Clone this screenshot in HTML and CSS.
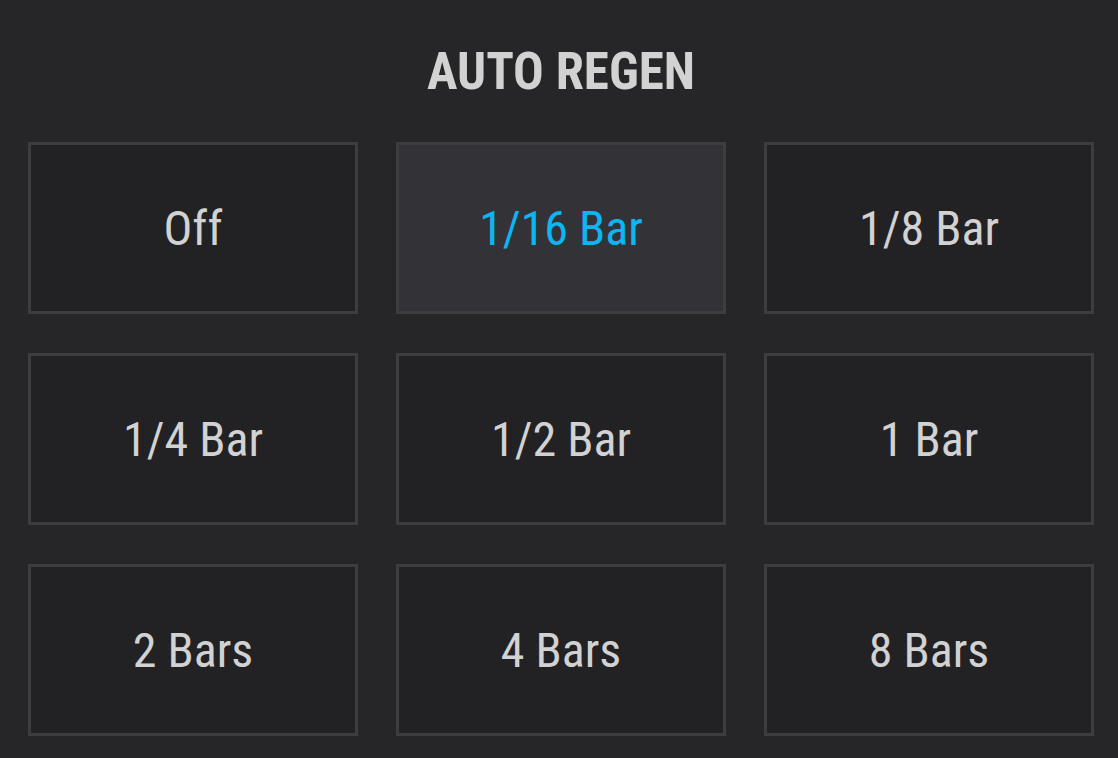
FILE: index.html
```html
<!DOCTYPE html>
<html>
<head>
<meta charset="utf-8">
<link rel="stylesheet" href="styles.css">
</head>
<body>
<div class="panel">
  <h1 class="title">AUTO REGEN</h1>
  <div class="grid">
    <div class="opt">Off</div>
    <div class="opt selected">1/16 Bar</div>
    <div class="opt">1/8 Bar</div>
    <div class="opt">1/4 Bar</div>
    <div class="opt">1/2 Bar</div>
    <div class="opt">1 Bar</div>
    <div class="opt">2 Bars</div>
    <div class="opt">4 Bars</div>
    <div class="opt">8 Bars</div>
  </div>
</div>
</body>
</html>
```
FILE: styles.css
```css
html, body {
  margin: 0;
  padding: 0;
  background: #262628;
}
body {
  width: 1118px;
  height: 758px;
  overflow: hidden;
  font-family: Roboto, "Liberation Sans", sans-serif;
  font-stretch: 75%;
}
.panel {
  padding: 0 24px 0 28px;
}
.title {
  margin: 0;
  height: 142px;
  display: flex;
  align-items: center;
  justify-content: center;
  box-sizing: border-box;
  color: #d2d2d2;
  font-size: 51px;
  font-weight: 700;
}
.grid {
  display: grid;
  grid-template-columns: repeat(3, 330px);
  grid-auto-rows: 172px;
  column-gap: 38px;
  row-gap: 39px;
}
.opt {
  box-sizing: border-box;
  border: 3px solid #3d3d3f;
  background: #222224;
  color: #d2d2d2;
  font-size: 48px;
  display: flex;
  align-items: center;
  justify-content: center;
}
.opt.selected {
  background: #333337;
  color: #0bb6f2;
}
```
